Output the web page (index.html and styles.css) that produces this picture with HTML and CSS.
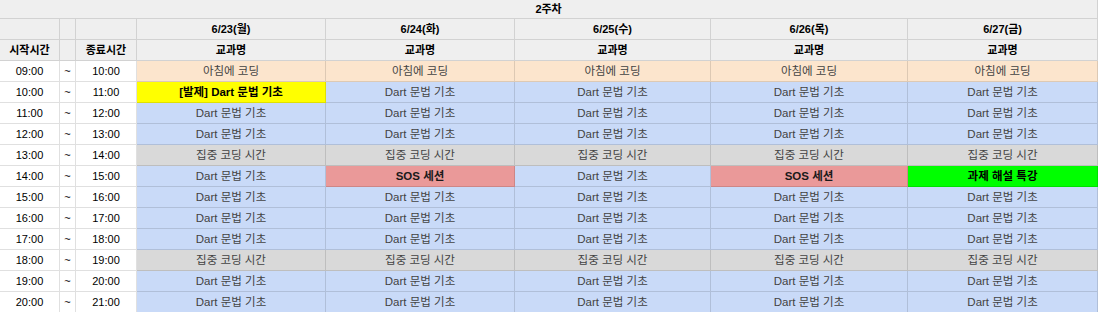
FILE: index.html
```html
<!DOCTYPE html>
<html lang="ko">
<head>
<meta charset="utf-8">
<title>2주차 시간표</title>
<link rel="stylesheet" href="styles.css">
</head>
<body>
<table class="sheet">
  <colgroup>
    <col class="c-start"><col class="c-tilde"><col class="c-end">
    <col class="c-d1"><col class="c-d2"><col class="c-d3"><col class="c-d4"><col class="c-d5">
  </colgroup>
  <tr class="r-title"><td class="hd bold" colspan="8">2주차</td></tr>
  <tr class="r-row"><td class="hd"></td><td class="hd"></td><td class="hd"></td>
    <td class="hd bold">6/23(월)</td><td class="hd bold">6/24(화)</td><td class="hd bold">6/25(수)</td><td class="hd bold">6/26(목)</td><td class="hd bold">6/27(금)</td></tr>
  <tr class="r-row"><td class="hd bold">시작시간</td><td class="hd"></td><td class="hd bold">종료시간</td>
    <td class="hd bold">교과명</td><td class="hd bold">교과명</td><td class="hd bold">교과명</td><td class="hd bold">교과명</td><td class="hd bold">교과명</td></tr>
  <tr class="r-row"><td class="tm">09:00</td><td class="tm">~</td><td class="tm">10:00</td>
    <td class="peach">아침에 코딩</td><td class="peach">아침에 코딩</td><td class="peach">아침에 코딩</td><td class="peach">아침에 코딩</td><td class="peach">아침에 코딩</td></tr>
  <tr class="r-row"><td class="tm">10:00</td><td class="tm">~</td><td class="tm">11:00</td>
    <td class="yellow">[발제] Dart 문법 기초</td><td class="blue">Dart 문법 기초</td><td class="blue">Dart 문법 기초</td><td class="blue">Dart 문법 기초</td><td class="blue">Dart 문법 기초</td></tr>
  <tr class="r-row"><td class="tm">11:00</td><td class="tm">~</td><td class="tm">12:00</td>
    <td class="blue">Dart 문법 기초</td><td class="blue">Dart 문법 기초</td><td class="blue">Dart 문법 기초</td><td class="blue">Dart 문법 기초</td><td class="blue">Dart 문법 기초</td></tr>
  <tr class="r-row"><td class="tm">12:00</td><td class="tm">~</td><td class="tm">13:00</td>
    <td class="blue">Dart 문법 기초</td><td class="blue">Dart 문법 기초</td><td class="blue">Dart 문법 기초</td><td class="blue">Dart 문법 기초</td><td class="blue">Dart 문법 기초</td></tr>
  <tr class="r-row"><td class="tm">13:00</td><td class="tm">~</td><td class="tm">14:00</td>
    <td class="gray">집중 코딩 시간</td><td class="gray">집중 코딩 시간</td><td class="gray">집중 코딩 시간</td><td class="gray">집중 코딩 시간</td><td class="gray">집중 코딩 시간</td></tr>
  <tr class="r-row"><td class="tm">14:00</td><td class="tm">~</td><td class="tm">15:00</td>
    <td class="blue">Dart 문법 기초</td><td class="pink">SOS 세션</td><td class="blue">Dart 문법 기초</td><td class="pink">SOS 세션</td><td class="green">과제 해설 특강</td></tr>
  <tr class="r-row"><td class="tm">15:00</td><td class="tm">~</td><td class="tm">16:00</td>
    <td class="blue">Dart 문법 기초</td><td class="blue">Dart 문법 기초</td><td class="blue">Dart 문법 기초</td><td class="blue">Dart 문법 기초</td><td class="blue">Dart 문법 기초</td></tr>
  <tr class="r-row"><td class="tm">16:00</td><td class="tm">~</td><td class="tm">17:00</td>
    <td class="blue">Dart 문법 기초</td><td class="blue">Dart 문법 기초</td><td class="blue">Dart 문법 기초</td><td class="blue">Dart 문법 기초</td><td class="blue">Dart 문법 기초</td></tr>
  <tr class="r-row"><td class="tm">17:00</td><td class="tm">~</td><td class="tm">18:00</td>
    <td class="blue">Dart 문법 기초</td><td class="blue">Dart 문법 기초</td><td class="blue">Dart 문법 기초</td><td class="blue">Dart 문법 기초</td><td class="blue">Dart 문법 기초</td></tr>
  <tr class="r-row"><td class="tm">18:00</td><td class="tm">~</td><td class="tm">19:00</td>
    <td class="gray">집중 코딩 시간</td><td class="gray">집중 코딩 시간</td><td class="gray">집중 코딩 시간</td><td class="gray">집중 코딩 시간</td><td class="gray">집중 코딩 시간</td></tr>
  <tr class="r-row"><td class="tm">19:00</td><td class="tm">~</td><td class="tm">20:00</td>
    <td class="blue">Dart 문법 기초</td><td class="blue">Dart 문법 기초</td><td class="blue">Dart 문법 기초</td><td class="blue">Dart 문법 기초</td><td class="blue">Dart 문법 기초</td></tr>
  <tr class="r-row"><td class="tm">20:00</td><td class="tm">~</td><td class="tm">21:00</td>
    <td class="blue">Dart 문법 기초</td><td class="blue">Dart 문법 기초</td><td class="blue">Dart 문법 기초</td><td class="blue">Dart 문법 기초</td><td class="blue">Dart 문법 기초</td></tr>
</table>
</body>
</html>
```

FILE: styles.css
```css
html, body {
  margin: 0;
  padding: 0;
  background: #ffffff;
}

.sheet {
  width: 1098px;
  table-layout: fixed;
  border-collapse: separate;
  border-spacing: 0;
  font-family: "Liberation Sans", "Noto Sans CJK KR", sans-serif;
  font-size: 11px;
  color: #000000;
}

.c-start { width: 60px; }
.c-tilde { width: 16px; }
.c-end { width: 61px; }
.c-d1 { width: 189px; }
.c-d2 { width: 189px; }
.c-d3 { width: 196px; }
.c-d4 { width: 197px; }
.c-d5 { width: 190px; }

.sheet td {
  box-sizing: border-box;
  padding: 0 2px;
  text-align: center;
  vertical-align: middle;
  white-space: nowrap;
  overflow: hidden;
  line-height: 14px;
  border-right: 1px solid rgba(0, 0, 0, 0.12);
  border-bottom: 1px solid rgba(0, 0, 0, 0.12);
}

.r-title td { height: 19px; }
.r-row td { height: 21px; }

.hd { background: #efefef; }
.bold { font-weight: bold; }

.tm {
  background: #ffffff;
  border-color: #dadada;
}

.peach, .blue, .gray, .yellow, .pink, .green {
  font-size: 11.5px;
}

.peach { background: #fce5cd; color: #434343; }
.blue { background: #c9daf8; color: #434343; }
.gray { background: #d9d9d9; color: #434343; }
.yellow { background: #ffff00; color: #000000; font-weight: bold; }
.pink { background: #ea9999; color: #1a1a1a; font-weight: bold; }
.green { background: #00ff00; color: #000000; font-weight: bold; }
```
